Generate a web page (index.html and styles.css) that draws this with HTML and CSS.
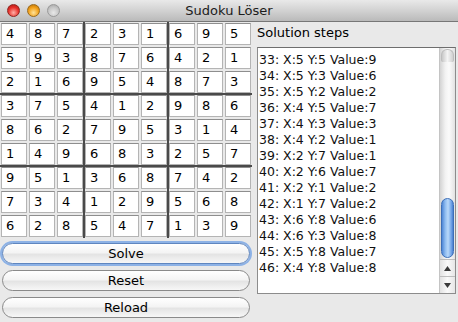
FILE: index.html
```html
<!DOCTYPE html>
<html lang="de">
<head>
  <meta charset="UTF-8">
  <title>Sudoku Löser</title>
  <link rel="stylesheet" href="styles.css">
</head>
<body>
  <div class="window">
    <div class="titlebar">
      <div class="lights">
        <span class="light red"></span>
        <span class="light yellow"></span>
        <span class="light off"></span>
      </div>
      <div class="title">Sudoku Löser</div>
    </div>

    <div class="content">
      <div class="left">
        <div class="board">
          <div class="row"><div class="cell"><span>4</span></div><div class="cell"><span>8</span></div><div class="cell"><span>7</span></div><div class="cell"><span>2</span></div><div class="cell"><span>3</span></div><div class="cell"><span>1</span></div><div class="cell"><span>6</span></div><div class="cell"><span>9</span></div><div class="cell"><span>5</span></div></div>
          <div class="row"><div class="cell"><span>5</span></div><div class="cell"><span>9</span></div><div class="cell"><span>3</span></div><div class="cell"><span>8</span></div><div class="cell"><span>7</span></div><div class="cell"><span>6</span></div><div class="cell"><span>4</span></div><div class="cell"><span>2</span></div><div class="cell"><span>1</span></div></div>
          <div class="row"><div class="cell"><span>2</span></div><div class="cell"><span>1</span></div><div class="cell"><span>6</span></div><div class="cell"><span>9</span></div><div class="cell"><span>5</span></div><div class="cell"><span>4</span></div><div class="cell"><span>8</span></div><div class="cell"><span>7</span></div><div class="cell"><span>3</span></div></div>
          <div class="row"><div class="cell"><span>3</span></div><div class="cell"><span>7</span></div><div class="cell"><span>5</span></div><div class="cell"><span>4</span></div><div class="cell"><span>1</span></div><div class="cell"><span>2</span></div><div class="cell"><span>9</span></div><div class="cell"><span>8</span></div><div class="cell"><span>6</span></div></div>
          <div class="row"><div class="cell"><span>8</span></div><div class="cell"><span>6</span></div><div class="cell"><span>2</span></div><div class="cell"><span>7</span></div><div class="cell"><span>9</span></div><div class="cell"><span>5</span></div><div class="cell"><span>3</span></div><div class="cell"><span>1</span></div><div class="cell"><span>4</span></div></div>
          <div class="row"><div class="cell"><span>1</span></div><div class="cell"><span>4</span></div><div class="cell"><span>9</span></div><div class="cell"><span>6</span></div><div class="cell"><span>8</span></div><div class="cell"><span>3</span></div><div class="cell"><span>2</span></div><div class="cell"><span>5</span></div><div class="cell"><span>7</span></div></div>
          <div class="row"><div class="cell"><span>9</span></div><div class="cell"><span>5</span></div><div class="cell"><span>1</span></div><div class="cell"><span>3</span></div><div class="cell"><span>6</span></div><div class="cell"><span>8</span></div><div class="cell"><span>7</span></div><div class="cell"><span>4</span></div><div class="cell"><span>2</span></div></div>
          <div class="row"><div class="cell"><span>7</span></div><div class="cell"><span>3</span></div><div class="cell"><span>4</span></div><div class="cell"><span>1</span></div><div class="cell"><span>2</span></div><div class="cell"><span>9</span></div><div class="cell"><span>5</span></div><div class="cell"><span>6</span></div><div class="cell"><span>8</span></div></div>
          <div class="row"><div class="cell"><span>6</span></div><div class="cell"><span>2</span></div><div class="cell"><span>8</span></div><div class="cell"><span>5</span></div><div class="cell"><span>4</span></div><div class="cell"><span>7</span></div><div class="cell"><span>1</span></div><div class="cell"><span>3</span></div><div class="cell"><span>9</span></div></div>
        </div>

        <div class="buttons">
          <button class="btn focused">Solve</button>
          <button class="btn">Reset</button>
          <button class="btn">Reload</button>
        </div>
      </div>

      <div class="right">
        <div class="label">Solution steps</div>
        <div class="list">
          <div class="lines">
            <div>33: X:5 Y:5 Value:9</div>
            <div>34: X:5 Y:3 Value:6</div>
            <div>35: X:5 Y:2 Value:2</div>
            <div>36: X:4 Y:5 Value:7</div>
            <div>37: X:4 Y:3 Value:3</div>
            <div>38: X:4 Y:2 Value:1</div>
            <div>39: X:2 Y:7 Value:1</div>
            <div>40: X:2 Y:6 Value:7</div>
            <div>41: X:2 Y:1 Value:2</div>
            <div>42: X:1 Y:7 Value:2</div>
            <div>43: X:6 Y:8 Value:6</div>
            <div>44: X:6 Y:3 Value:8</div>
            <div>45: X:5 Y:8 Value:7</div>
            <div>46: X:4 Y:8 Value:8</div>
          </div>
          <div class="scrollbar">
            <div class="track">
              <div class="cap"></div>
              <div class="thumb"></div>
            </div>
            <div class="arrow">
              <svg width="7" height="5" viewBox="0 0 7 5"><polygon points="3.5,0 7,5 0,5" fill="#3a3a3a"/></svg>
            </div>
            <div class="arrow">
              <svg width="7" height="5" viewBox="0 0 7 5"><polygon points="0,0 7,0 3.5,5" fill="#3a3a3a"/></svg>
            </div>
          </div>
        </div>
      </div>
    </div>
  </div>
</body>
</html>
```

FILE: styles.css
```css
/* General */
body {
  margin: 0;
  padding: 0;
  font-family: 'DejaVu Sans', 'Liberation Sans', sans-serif;
  font-size: 12.5px;
  color: #000;
  background: #e9e9e9;
}

.window {
  width: 458px;
  height: 322px;
  background: #e9e9e9;
  overflow: hidden;
}

/* Title bar */
.titlebar {
  height: 22px;
  box-sizing: border-box;
  display: flex;
  align-items: center;
  background: linear-gradient(#e9e9e9, #d2d2d2 50%, #bababa);
  border-bottom: 1px solid #777;
  position: relative;
}

.lights {
  display: flex;
  gap: 7px;
  padding-left: 7px;
}

.light {
  width: 13px;
  height: 13px;
  border-radius: 50%;
  box-sizing: border-box;
}

.light.red {
  background: radial-gradient(circle at 50% 70%, #ffb1a8, #e7302a 55%, #a8140f);
  border: 1px solid #8f2520;
}

.light.yellow {
  background: radial-gradient(circle at 50% 70%, #ffe39a, #f2a018 55%, #b26a06);
  border: 1px solid #9a6a1a;
}

.light.off {
  background: radial-gradient(circle at 50% 70%, #e8e8e8, #c6c6c6 55%, #a0a0a0);
  border: 1px solid #999;
}

.title {
  flex: 1;
  text-align: center;
  margin-right: 60px;
  font-size: 13px;
  color: #1c1c1c;
}

/* Layout */
.content {
  display: flex;
}

.left {
  width: 252px;
}

/* Sudoku board */
.board {
  display: flex;
  flex-direction: column;
}

.row {
  display: flex;
}

.cell {
  width: 28px;
  height: 24px;
  padding: 1px;
  box-sizing: border-box;
}

.cell span {
  display: block;
  height: 100%;
  box-sizing: border-box;
  background: #fff;
  border: 1px solid #b4b4b4;
  border-top-color: #8e8e8e;
  padding-left: 4px;
  line-height: 20px;
  font-size: 13px;
}

.cell:nth-child(3),
.cell:nth-child(6) {
  padding-right: 0;
  border-right: 1px solid #4a4a4a;
}

.cell:nth-child(4),
.cell:nth-child(7) {
  padding-left: 0;
  border-left: 1px solid #4a4a4a;
}

.row:nth-child(3) .cell,
.row:nth-child(6) .cell {
  padding-bottom: 0;
  border-bottom: 1px solid #4a4a4a;
}

.row:nth-child(4) .cell,
.row:nth-child(7) .cell {
  padding-top: 0;
  border-top: 1px solid #4a4a4a;
}

/* Buttons */
.buttons {
  display: flex;
  flex-direction: column;
  gap: 6px;
  margin-top: 5px;
  padding: 0 2px;
}

.btn {
  height: 21px;
  border: 1px solid #8a8a8a;
  border-radius: 11px;
  background: linear-gradient(#ffffff, #f4f4f4 45%, #e4e4e4 55%, #f7f7f7);
  font-family: 'DejaVu Sans', 'Liberation Sans', sans-serif;
  font-size: 13px;
  color: #000;
  padding: 0;
}

.btn.focused {
  border-color: #5f86bf;
  box-shadow: 0 0 0 2px #8db2e6;
}

/* Solution steps */
.right {
  flex: 1;
  padding: 3px 2px 0 5px;
}

.label {
  line-height: 16px;
  font-size: 13px;
  margin-top: 0;
}

.list {
  margin-top: 6px;
  height: 245px;
  display: flex;
  background: #fff;
  border: 1px solid #8c8c8c;
  border-top-color: #6e6e6e;
}

.lines {
  flex: 1;
  padding: 4px 1px;
  line-height: 16px;
  color: #111;
}

.scrollbar {
  width: 15px;
  display: flex;
  flex-direction: column;
  border-left: 1px solid #c4c4c4;
}

.track {
  flex: 1;
  display: flex;
  flex-direction: column;
  background: linear-gradient(to right, #d4d4d4, #f2f2f2 35%, #fbfbfb 60%, #e2e2e2);
}

.cap {
  height: 12px;
  margin: 1px 1px 0;
  border-radius: 6px 6px 2px 2px;
  background: linear-gradient(to right, #c8c8c8, #f4f4f4 50%, #d0d0d0);
  border: 1px solid #bdbdbd;
  border-bottom: none;
}

.thumb {
  margin-top: 136px;
  height: 60px;
  margin-left: 1px;
  margin-right: 1px;
  box-sizing: border-box;
  border-radius: 7px;
  border: 1px solid #3d6fb8;
  background: linear-gradient(to right, #4e86d6, #8fbcf0 30%, #b8d8fa 55%, #6fa2e6 85%, #4a7fcf);
}

.arrow {
  height: 16px;
  display: flex;
  align-items: center;
  justify-content: center;
  border-top: 1px solid #bdbdbd;
  background: linear-gradient(to right, #e2e2e2, #fafafa 50%, #e6e6e6);
}
```
